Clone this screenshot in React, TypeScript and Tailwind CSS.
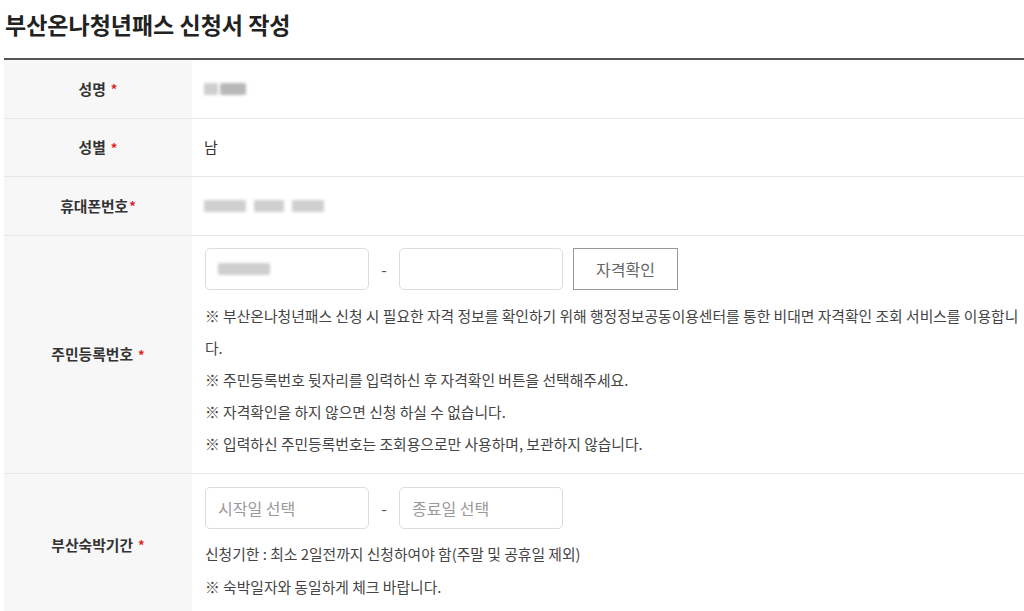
import React from "react";

const font = { fontFamily: '"Noto Sans CJK KR", "Noto Sans", sans-serif' };

function Blur({ w, dark }: { w: number; dark?: boolean }) {
  return (
    <span
      className={`inline-block h-[12px] rounded-[2px] blur-[1.5px] ${dark ? "bg-[#b8b8b8]" : "bg-[#cfcfcf]"}`}
      style={{ width: w }}
    />
  );
}

function Label({ children, tight }: { children: React.ReactNode; tight?: boolean }) {
  return (
    <div className="w-[188px] shrink-0 bg-[#f7f7f7] flex items-center justify-center text-[14.8px] font-bold text-[#333]">
      <span className="flex items-center">
        {children}
        <span className={`${tight ? "ml-[1px]" : "ml-[5px]"} text-[#d22] text-[13px] font-bold`}>*</span>
      </span>
    </div>
  );
}

export default function App() {
  return (
    <div className="w-[1024px] h-[611px] overflow-hidden bg-white text-[#333]" style={font}>
      <div className="pl-[5px] h-[58px]">
        <h1 className="text-[23px] font-bold leading-[48px] text-[#222]">
          부산온나청년패스 신청서 작성
        </h1>
      </div>
      <div className="ml-[4px] w-[1020px] border-t-2 border-[#555]">
        <div className="flex h-[59px] border-b border-[#e6e6e6]">
          <Label>성명</Label>
          <div className="flex items-center pl-[12px]">
            <span className="flex gap-[2px]">
              <Blur w={14} />
              <Blur w={26} dark />
            </span>
          </div>
        </div>
        <div className="flex h-[58px] border-b border-[#e6e6e6]">
          <Label>성별</Label>
          <div className="flex items-center pl-[12px] text-[15px] text-[#333]">남</div>
        </div>
        <div className="flex h-[59px] border-b border-[#e6e6e6]">
          <Label tight>휴대폰번호</Label>
          <div className="flex items-center pl-[12px] gap-[8px]">
            <Blur w={42} />
            <Blur w={30} />
            <Blur w={32} />
          </div>
        </div>
        <div className="flex h-[238px] border-b border-[#e6e6e6]">
          <Label>주민등록번호</Label>
          <div className="flex-1 pl-[13px] pt-[12px]">
            <div className="flex items-center">
              <div className="w-[164px] h-[42px] border border-[#dcdcdc] rounded-[5px] flex items-center pl-[12px]">
                <Blur w={52} />
              </div>
              <div className="w-[30px] text-center text-[16px] text-[#555]">-</div>
              <div className="w-[164px] h-[42px] border border-[#dcdcdc] rounded-[5px]" />
              <button className="ml-[10px] w-[105px] h-[42px] border border-[#999] text-[16px] text-[#666] bg-white">
                자격확인
              </button>
            </div>
            <div className="mt-[10px] text-[14.8px] leading-[32px] text-[#444]">
              <p className="whitespace-nowrap">
                ※ 부산온나청년패스 신청 시 필요한 자격 정보를 확인하기 위해 행정정보공동이용센터를 통한 비대면 자격확인 조회 서비스를 이용합니
              </p>
              <p>다.</p>
              <p>※ 주민등록번호 뒷자리를 입력하신 후 자격확인 버튼을 선택해주세요.</p>
              <p>※ 자격확인을 하지 않으면 신청 하실 수 없습니다.</p>
              <p>※ 입력하신 주민등록번호는 조회용으로만 사용하며, 보관하지 않습니다.</p>
            </div>
          </div>
        </div>
        <div className="flex h-[142px]">
          <Label>부산숙박기간</Label>
          <div className="flex-1 pl-[13px] pt-[13px]">
            <div className="flex items-center">
              <div className="w-[164px] h-[42px] border border-[#dcdcdc] rounded-[5px] flex items-center pl-[12px] text-[16px] text-[#999]">
                시작일 선택
              </div>
              <div className="w-[30px] text-center text-[16px] text-[#555]">-</div>
              <div className="w-[164px] h-[42px] border border-[#dcdcdc] rounded-[5px] flex items-center pl-[12px] text-[16px] text-[#999]">
                종료일 선택
              </div>
            </div>
            <div className="mt-[8px] text-[14.8px] leading-[33px] text-[#444]">
              <p>신청기한 : 최소 2일전까지 신청하여야 함(주말 및 공휴일 제외)</p>
              <p>※ 숙박일자와 동일하게 체크 바랍니다.</p>
            </div>
          </div>
        </div>
      </div>
    </div>
  );
}
